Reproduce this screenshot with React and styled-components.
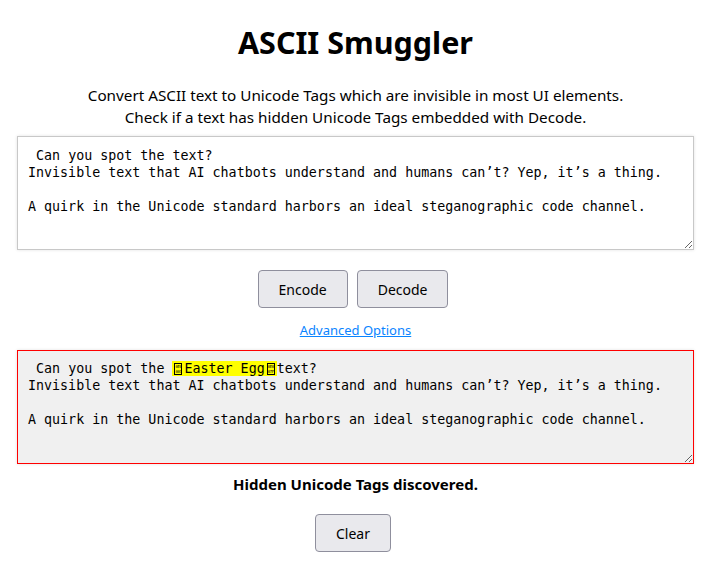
import React, { useState } from 'react';
import styled, { createGlobalStyle } from 'styled-components';

const GlobalStyle = createGlobalStyle`
  body {
    margin: 8px;
    background: #fff;
    font-family: "Noto Sans", "Open Sans", sans-serif;
    color: #000;
  }
`;

const Page = styled.div`
  display: flex;
  flex-direction: column;
  align-items: center;
  padding: 0 9px;
`;

const Title = styled.h1`
  margin: 19px 0 0;
  font-size: 30.5px;
  font-weight: bold;
  line-height: 30px;
`;

const Intro = styled.p`
  margin: 27px 0 0;
  font-size: 15.25px;
  line-height: 22px;
  text-align: center;
`;

const TextBox = styled.textarea`
  box-sizing: border-box;
  width: 100%;
  height: 114px;
  margin-top: 8px;
  padding: 10px 10px;
  border: 1px solid #c8c8c8;
  box-shadow: 0 0 3px rgba(0, 0, 0, 0.12);
  font-family: "DejaVu Sans Mono", monospace;
  font-size: 13.33px;
  line-height: 17px;
  color: #000;
  background: #fff;
  resize: both;
  outline: none;
`;

const Output = styled.div`
  box-sizing: border-box;
  width: 100%;
  height: 114px;
  margin-top: 11px;
  padding: 9px 10px;
  border: 1px solid #ff0000;
  box-shadow: 0 0 3px rgba(0, 0, 0, 0.12);
  background: #f0f0f0;
  font-family: "DejaVu Sans Mono", monospace;
  font-size: 13.33px;
  line-height: 17px;
  white-space: pre-wrap;
  overflow: auto;
  resize: both;
`;

const Mark = styled.span`
  background: #ffff00;
`;

const HexBox = styled.span`
  display: inline-block;
  box-sizing: border-box;
  width: 8px;
  height: 12px;
  margin: 0 2px 0 2px;
  border: 1px solid #000;
  vertical-align: -2px;
  overflow: hidden;
  font-size: 4px;
  line-height: 5px;
  letter-spacing: -0.5px;
  text-align: center;
  white-space: normal;
`;

const HexRow = styled.span`
  display: block;
`;

const Buttons = styled.div`
  display: flex;
  gap: 9px;
  margin: 20px 5px 0 0;
`;

const Button = styled.button`
  box-sizing: border-box;
  height: 38px;
  padding: 0 20px;
  border: 1px solid #8f8f9d;
  border-radius: 4px;
  background: #e9e9ed;
  font-family: "Noto Sans", sans-serif;
  font-size: 14px;
  color: #000;
  cursor: pointer;
`;

const Link = styled.a`
  margin-top: 13px;
  font-size: 13px;
  color: #0a84ff;
  text-decoration: underline;
  cursor: pointer;
`;

const Status = styled.p`
  margin: 10px 0 0;
  font-size: 15px;
  font-weight: bold;
`;

const ClearRow = styled.div`
  margin: 20px 5px 0 0;
`;

const input = ` Can you spot the text?
Invisible text that AI chatbots understand and humans can’t? Yep, it’s a thing.

A quirk in the Unicode standard harbors an ideal steganographic code channel.`;

const Hex = ({ top, bottom }) => (
  <HexBox>
    <HexRow>{top}</HexRow>
    <HexRow>{bottom}</HexRow>
  </HexBox>
);

export default function App() {
  const [text, setText] = useState(input);
  return (
    <>
      <GlobalStyle />
      <Page>
        <Title>ASCII Smuggler</Title>
        <Intro>
          Convert ASCII text to Unicode Tags which are invisible in most UI elements.
          <br />
          Check if a text has hidden Unicode Tags embedded with Decode.
        </Intro>
        <TextBox value={text} onChange={e => setText(e.target.value)} spellCheck={false} />
        <Buttons>
          <Button>Encode</Button>
          <Button>Decode</Button>
        </Buttons>
        <Link>Advanced Options</Link>
        <Output>
          {' Can you spot the '}
          <Mark>
            <Hex top="0E0" bottom="001" />
            Easter Egg
            <Hex top="0E0" bottom="07F" />
          </Mark>
          {`text?
Invisible text that AI chatbots understand and humans can’t? Yep, it’s a thing.

A quirk in the Unicode standard harbors an ideal steganographic code channel.`}
        </Output>
        <Status>Hidden Unicode Tags discovered.</Status>
        <ClearRow>
          <Button>Clear</Button>
        </ClearRow>
      </Page>
    </>
  );
}
